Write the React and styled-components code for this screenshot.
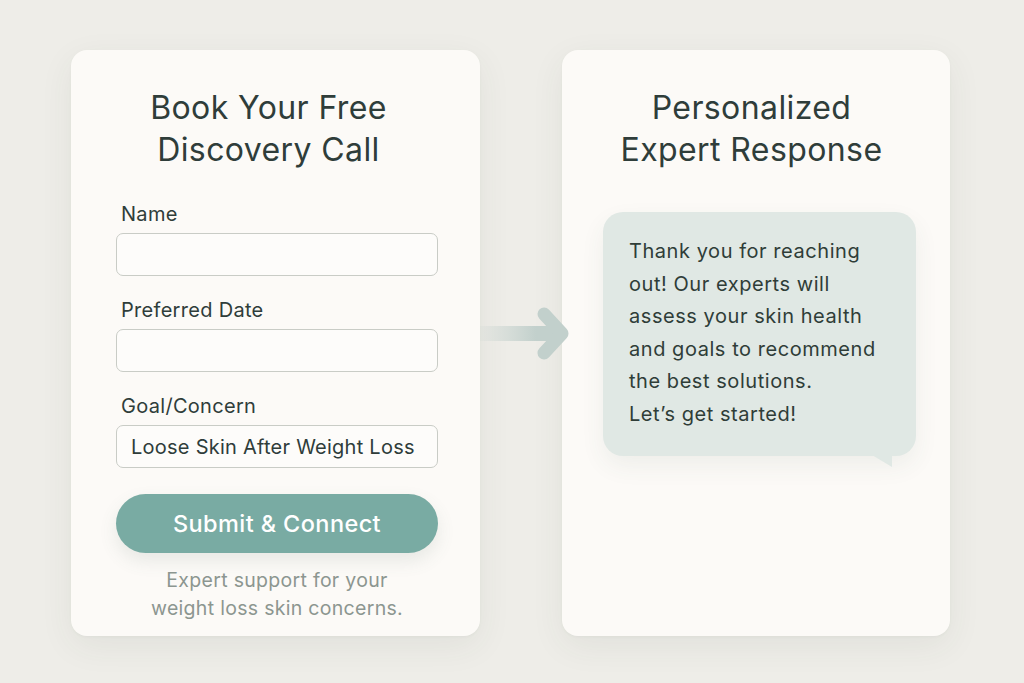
import React from 'react'
import styled, { createGlobalStyle } from 'styled-components'

const Global = createGlobalStyle`
  html, body {
    margin: 0;
    padding: 0;
    background: #eeede8;
  }
  body {
    font-family: Inter, "Open Sans", "Liberation Sans", sans-serif;
    color: #2f3d3a;
  }
`

const Page = styled.div`
  width: 1024px;
  height: 683px;
  box-sizing: border-box;
  padding: 50px 0 0 71px;
  display: flex;
  align-items: flex-start;
`

const Card = styled.section`
  width: ${p => p.$w}px;
  height: 586px;
  box-sizing: border-box;
  background: #fcfaf7;
  border-radius: 16px;
  box-shadow: 0 10px 34px rgba(60, 70, 60, 0.07), 0 1px 3px rgba(60, 70, 60, 0.04);
  padding: 37px 0 0;
  display: flex;
  flex-direction: column;
`

const Title = styled.h2`
  margin: 0 0 ${p => p.$gap || 26}px;
  padding-right: ${p => p.$shift || 0}px;
  text-align: center;
  font-size: 32px;
  line-height: 42px;
  font-weight: 400;
  color: #2f3d3a;
  letter-spacing: 0.4px;
`

const Form = styled.div`
  padding: 0 42px 0 45px;
  display: flex;
  flex-direction: column;
`

const Label = styled.label`
  font-size: 20px;
  line-height: 24px;
  margin: 0 0 7px 5px;
  color: #2f3d3a;
  letter-spacing: 0.3px;
`

const Input = styled.div`
  height: 43px;
  box-sizing: border-box;
  border: 1px solid #c9ccc6;
  border-radius: 7px;
  background: #fdfcfa;
  margin-bottom: 22px;
  padding: 0 14px;
  display: flex;
  align-items: center;
  font-size: 20px;
  color: #2f3d3a;
  letter-spacing: 0.25px;
`

const Button = styled.div`
  margin-top: 4px;
  height: 59px;
  border-radius: 30px;
  background: #79aba3;
  color: #fff;
  font-size: 23.5px;
  font-weight: 500;
  letter-spacing: 0.4px;
  display: flex;
  align-items: center;
  justify-content: center;
  box-shadow: 0 8px 18px rgba(80, 110, 100, 0.12);
`

const Note = styled.p`
  margin: 13px 0 0;
  text-align: center;
  font-size: 19.5px;
  line-height: 28px;
  color: #8c9690;
  letter-spacing: 0.3px;
`

const Connector = styled.div`
  width: 82px;
  height: 60px;
  margin-top: 254px;
  position: relative;
  z-index: 2;
  svg { overflow: visible; display: block; }
`

const Bubble = styled.div`
  position: relative;
  margin: 15px 34px 0 41px;
  padding: 23px 18px 26px 26px;
  background: #e0e8e4;
  border-radius: 20px;
  font-size: 20px;
  line-height: 32.5px;
  letter-spacing: 0.55px;
  color: #2f3d38;
  box-shadow: 0 10px 24px rgba(60, 80, 70, 0.07);
  &::after {
    content: '';
    position: absolute;
    right: 24px;
    bottom: -11px;
    width: 20px;
    height: 12px;
    background: #e0e8e4;
    clip-path: polygon(0 0, 100% 0, 100% 100%);
  }
`

const Arrow = () => (
  <svg width="90" height="60" viewBox="0 0 90 60">
    <defs>
      <linearGradient id="shaft" x1="0" x2="1" y1="0" y2="0">
        <stop offset="0" stopColor="#c8d3cf" stopOpacity="0.15" />
        <stop offset="0.7" stopColor="#c2d0cc" stopOpacity="1" />
      </linearGradient>
    </defs>
    <rect x="0" y="22" width="80" height="15" fill="url(#shaft)" />
    <path d="M64 10 L82 29.5 L64 49" fill="none" stroke="#c2d0cc" strokeWidth="13" strokeLinecap="round" strokeLinejoin="round" />
  </svg>
)

export default function App() {
  return (
    <>
      <Global />
      <Page>
        <Card $w={409}>
          <Title $shift={14} $gap={31}>Book Your Free<br />Discovery Call</Title>
          <Form>
            <Label>Name</Label>
            <Input />
            <Label>Preferred Date</Label>
            <Input />
            <Label>Goal/Concern</Label>
            <Input>Loose Skin After Weight Loss</Input>
            <Button>Submit &amp; Connect</Button>
            <Note>Expert support for your<br />weight loss skin concerns.</Note>
          </Form>
        </Card>
        <Connector><Arrow /></Connector>
        <Card $w={388}>
          <Title $shift={9}>Personalized<br />Expert Response</Title>
          <Bubble>
            Thank you for reaching<br />
            out! Our experts will<br />
            assess your skin health<br />
            and goals to recommend<br />
            the best solutions.<br />
            Let’s get started!
          </Bubble>
        </Card>
      </Page>
    </>
  )
}
